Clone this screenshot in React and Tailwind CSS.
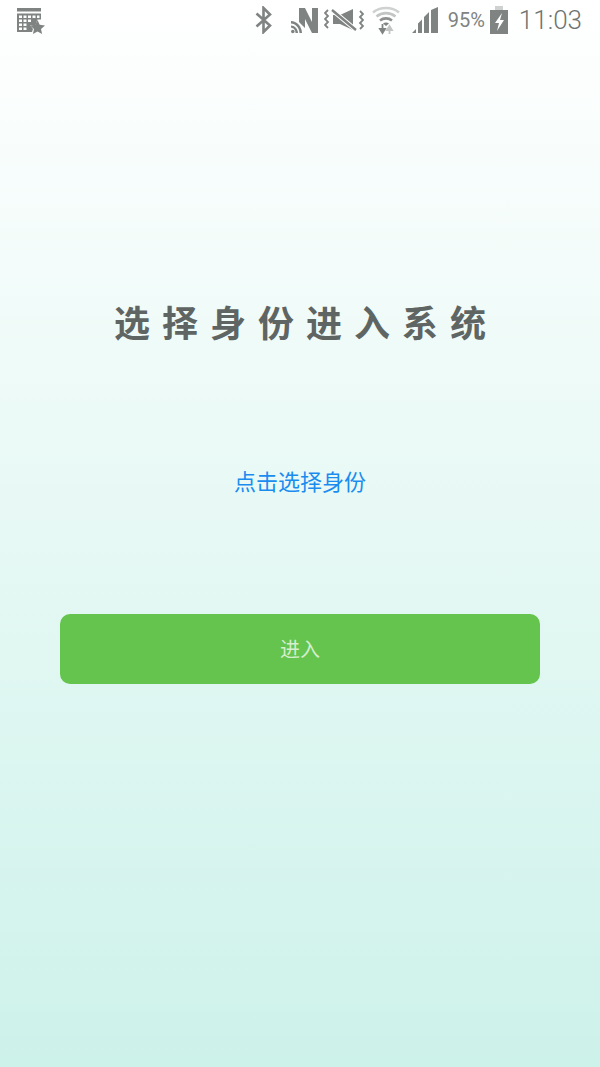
const gray = "#7f8382";

function CalendarStar() {
  return (
    <svg width="30" height="28" viewBox="0 0 30 28" fill={gray} className="shrink-0">
      <rect x="1" y="2" width="24" height="3.500" />
      <path
        fillRule="evenodd"
        d="M1 7.500h24v6h-3.500l-2 5.500H14l3 4-1 3H1zM3 9.500V12h3V9.500zm4.500 0V12h3V9.500zm4.500 0V12h3V9.500zm4.500 0V12h3V9.500zm4.500 0V12h2.500V9.500zM3 13.500V16h3v-2.500zm4.500 0V16h3v-2.500zm4.500 0V16h3v-2.500zM3 17.500V20h3v-2.500zm4.500 0V20h3v-2.500zM3 21.500V24h3v-2.500zm4.500 0V24h3v-2.500z"
      />
      <path d="M21.500 14l2.200 4.800 5.300.6-4 3.600 1.100 5-4.600-2.600-4.600 2.600 1.100-5-4-3.600 5.300-.6z" />
    </svg>
  );
}

function Bluetooth() {
  return (
    <svg width="18" height="28" viewBox="0 0 18 28" fill="none" stroke={gray} strokeWidth="2.600" className="shrink-0">
      <path d="M1.500 7.500L15 19.500 8.500 26V2L15 8.500 1.500 20.500" />
    </svg>
  );
}

function Nfc() {
  return (
    <svg width="28" height="27" viewBox="0 0 28 27" fill={gray} className="shrink-0">
      <path d="M8 1h6l7 14V1h6v25h-6L14 12v9l-6-6z" />
      <path d="M0 14c5.500 0 11 5.500 11 12H8.500C8.500 21 4.500 16.500 0 16.500zM0 18.500c3.500 0 7 3.500 7 7.500H4.500c0-3-2-5.200-4.500-5.200z" />
      <circle cx="1.800" cy="24.500" r="1.800" />
    </svg>
  );
}

function VibrateMute() {
  return (
    <svg width="40" height="24" viewBox="0 0 40 24" fill="none" className="shrink-0">
      <path d="M4 2L1 5l3 3-3 3 3 3-3 3 3 3" stroke={gray} strokeWidth="1.800" />
      <path d="M36 3l3 3-3 3 3 3-3 3 3 3-3 3" stroke={gray} strokeWidth="1.800" />
      <path d="M9 7h7l13-6v21l-13-6H9z" fill={gray} />
      <path d="M8 2l24 20" stroke="#ffffff" strokeWidth="4.500" />
      <path d="M8 2l24 20" stroke={gray} strokeWidth="2.400" />
    </svg>
  );
}

function Wifi() {
  return (
    <svg width="28" height="29" viewBox="0 0 28 29" fill="none" className="shrink-0">
      <path d="M1 6.500C8 .5 20 .5 27 6.500" stroke="#cfd1d0" strokeWidth="2.600" />
      <path d="M4.500 10.500c5.500-4.500 13.500-4.500 19 0" stroke="#c3c5c4" strokeWidth="2.600" />
      <path d="M8 14.500c3.500-2.800 8.500-2.800 12 0" stroke="#8d908f" strokeWidth="2.600" />
      <path d="M11 17.500c1.800-1.200 4.200-1.200 6 0L14 20z" fill={gray} />
      <path d="M10.500 18v8M8 23l2.500 4 2.500-4z" fill={gray} stroke={gray} strokeWidth="1.800" />
      <path d="M17.500 28v-8M15 24l2.500-4 2.500 4z" fill="#c3c5c4" stroke="#c3c5c4" strokeWidth="1.800" />
    </svg>
  );
}

function Signal() {
  return (
    <svg width="27" height="27" viewBox="0 0 27 27" fill={gray} className="shrink-0">
      <path d="M0 26l4-4v4zM6 26v-9.500l4-4V26zM12 26V10l5-5v21zM19 26V3l7-3v26z" />
    </svg>
  );
}

function Battery() {
  return (
    <svg width="18" height="28" viewBox="0 0 18 28" className="shrink-0">
      <rect x="5" y="0" width="8" height="4" fill="#cfd1d0" />
      <rect x="0" y="4" width="18" height="24" fill={gray} />
      <path d="M12 7L5 17h4l-2 8 7-11h-4z" fill="#ffffff" />
    </svg>
  );
}

export default function App() {
  return (
    <div
      className="w-[600px] h-[1067px] flex flex-col bg-gradient-to-b from-white to-[#cdf2ea] overflow-hidden"
      style={{ fontFamily: '"Liberation Sans", "Noto Sans CJK SC", sans-serif' }}
    >
      <div className="h-[40px] flex items-center shrink-0 relative">
        <div className="ml-[16px] -mt-[1px]">
          <CalendarStar />
        </div>
        <div className="flex-1" />
        <div className="flex items-center pr-[18px]" style={{ fontFamily: 'Roboto, "Liberation Sans", sans-serif' }}>
          <Bluetooth />
          <div className="ml-[18px]"><Nfc /></div>
          <div className="ml-[5px]"><VibrateMute /></div>
          <div className="ml-[8px]"><Wifi /></div>
          <div className="ml-[12px]"><Signal /></div>
          <span className="ml-[9px] text-[20px] leading-[40px] font-normal text-[#7f8382]">95%</span>
          <div className="ml-[5px]"><Battery /></div>
          <span className="ml-[11px] text-[26px] leading-[40px] font-light text-[#6f7372]">11:03</span>
        </div>
      </div>

      <div className="flex flex-col items-center">
        <h1 className="mt-[263px] text-[36px] leading-[44px] font-bold tracking-[12px] pl-[12px] text-[#5f6563] whitespace-nowrap">
          选择身份进入系统
        </h1>
        <p className="mt-[120px] text-[22px] leading-[32px] text-[#1a8cf0]">点击选择身份</p>
        <button className="mt-[115px] w-[480px] h-[70px] pt-[2px] rounded-[10px] bg-[#64c44d] text-[20px] text-[#d5eecd] flex items-center justify-center">
          进入
        </button>
      </div>
    </div>
  );
}
